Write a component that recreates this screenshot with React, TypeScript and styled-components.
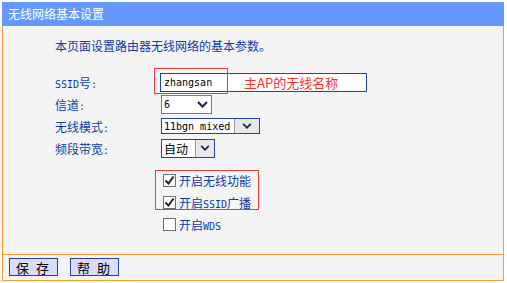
import React from "react";
import styled, { createGlobalStyle } from "styled-components";

const Global = createGlobalStyle`
  html, body { margin: 0; padding: 0; background: #ffffff; }
  body {
    font-family: "Noto Sans CJK SC", "Liberation Sans", sans-serif;
    font-size: 12px;
  }
`;

const Page = styled.div`
  padding: 2px 0 0 2px;
  width: 502px;
`;

const Header = styled.div`
  height: 24px;
  line-height: 24px;
  background: #6699ff;
  color: #ffffff;
  font-size: 12px;
  padding-left: 6px;
`;

const Body = styled.div`
  background: #f4f4f4;
  border: 1px solid #ff9933;
  border-top: none;
  padding: 10px 0 0 52px;
  box-sizing: content-box;
  height: 218px;
`;

const Intro = styled.div`
  line-height: 20px;
  color: #0f3ba0;
  font-size: 12px;
`;

const Form = styled.div`
  margin-top: 15px;
  display: flex;
  flex-direction: column;
`;

const Row = styled.div<{ $h?: number }>`
  display: grid;
  grid-template-columns: 105px auto;
  align-items: center;
  height: ${(p) => p.$h ?? 22}px;
`;

const Label = styled.div`
  color: #0f3ba0;
  font-size: 12px;
  white-space: nowrap;
`;

const Mono = styled.span`
  font-family: "DejaVu Sans Mono", "Liberation Mono", monospace;
  font-size: 10px;
`;

const Cell = styled.div`
  position: relative;
  display: flex;
  align-items: center;
  height: 100%;
`;

const TextBox = styled.div`
  box-sizing: border-box;
  width: 207px;
  height: 19px;
  border: 1px solid #1f44a8;
  background: #ffffff;
  display: flex;
  align-items: center;
  padding-left: 3px;
  color: #000;
`;

const Note = styled.span`
  position: absolute;
  left: 84px;
  top: 0;
  height: 100%;
  display: flex;
  align-items: center;
  color: #ff3030;
  font-size: 13px;
  font-family: "Noto Sans CJK SC", sans-serif;
`;

const RedBox = styled.div<{ $l: number; $t: number; $w: number; $h: number }>`
  position: absolute;
  left: ${(p) => p.$l}px;
  top: ${(p) => p.$t}px;
  width: ${(p) => p.$w}px;
  height: ${(p) => p.$h}px;
  box-sizing: border-box;
  border: 1px solid #f03a3a;
  pointer-events: none;
`;

const Select = styled.div<{ $w: number; $h: number; $gray?: boolean }>`
  box-sizing: border-box;
  margin-left: 1px;
  width: ${(p) => p.$w}px;
  height: ${(p) => p.$h}px;
  border: 1px solid ${(p) => (p.$gray ? "#7a7a7a" : "#1f44a8")};
  background: #ffffff;
  display: flex;
  align-items: center;
  color: #000;
`;

const SelValue = styled.div`
  flex: 1;
  padding-left: 2px;
  white-space: nowrap;
  display: flex;
  align-items: center;
`;

const Arrow = styled.div`
  width: 18px;
  display: flex;
  align-items: center;
  justify-content: center;
`;

const DropBtn = styled.div<{ $w: number }>`
  box-sizing: border-box;
  width: ${(p) => p.$w}px;
  height: 100%;
  background: #e8e8e8;
  border-left: 1px solid #9a9a9a;
  display: flex;
  align-items: center;
  justify-content: center;
`;

const Chevron = ({ w = 11, h = 7 }: { w?: number; h?: number }) => (
  <svg width={w} height={h} viewBox="0 0 11 7">
    <polyline
      points="1,1 5.5,5.5 10,1"
      fill="none"
      stroke="#1a2450"
      strokeWidth="2"
    />
  </svg>
);

const Check = styled.div`
  box-sizing: border-box;
  width: 13px;
  height: 13px;
  margin-left: 3px;
  border: 1px solid #707070;
  background: #ffffff;
  display: flex;
  align-items: center;
  justify-content: center;
`;

const CheckText = styled.span`
  margin-left: 3px;
  color: #0f3ba0;
  font-size: 12px;
  white-space: nowrap;
`;

const Tick = () => (
  <svg width="11" height="11" viewBox="0 0 11 11">
    <polyline
      points="1.5,5.5 4.5,8.5 9.5,1.5"
      fill="none"
      stroke="#222"
      strokeWidth="2"
    />
  </svg>
);

const Group = styled.div`
  position: relative;
  display: flex;
  flex-direction: column;
  padding-top: 10px;
`;

const Footer = styled.div`
  background: #f4f4f4;
  border: 1px solid #ff9933;
  border-top: none;
  display: flex;
  align-items: flex-start;
  gap: 12px;
  padding: 3px 0 0 6px;
  box-sizing: border-box;
  height: 26px;
`;

const Button = styled.div`
  box-sizing: border-box;
  width: 49px;
  height: 18px;
  background: #dcdcfc;
  border: 1px solid #1f44a8;
  color: #000;
  font-size: 13px;
  display: flex;
  align-items: center;
  justify-content: center;
  letter-spacing: 2px;
`;

function CheckRow({ checked, children }: { checked: boolean; children: React.ReactNode }) {
  return (
    <Row>
      <div />
      <Cell>
        <Check>{checked && <Tick />}</Check>
        <CheckText>{children}</CheckText>
      </Cell>
    </Row>
  );
}

export default function App() {
  return (
    <>
      <Global />
      <Page>
        <Header>无线网络基本设置</Header>
        <Body>
          <Intro>本页面设置路由器无线网络的基本参数。</Intro>
          <Form>
            <Row>
              <Label>
                <Mono>SSID</Mono>号<Mono>:</Mono>
              </Label>
              <Cell>
                <TextBox>
                  <Mono>zhangsan</Mono>
                  <Note>主AP的无线名称</Note>
                </TextBox>
                <RedBox $l={-6} $t={-3} $w={74} $h={26} />
              </Cell>
            </Row>
            <Row>
              <Label>
                信道<Mono>:</Mono>
              </Label>
              <Cell>
                <Select $w={51} $h={19} $gray>
                  <SelValue>
                    <Mono>6</Mono>
                  </SelValue>
                  <Arrow>
                    <Chevron />
                  </Arrow>
                </Select>
              </Cell>
            </Row>
            <Row>
              <Label>
                无线模式<Mono>:</Mono>
              </Label>
              <Cell>
                <Select $w={99} $h={16}>
                  <SelValue>
                    <Mono>11bgn mixed</Mono>
                  </SelValue>
                  <DropBtn $w={25}>
                    <Chevron w={10} h={6} />
                  </DropBtn>
                </Select>
              </Cell>
            </Row>
            <Row>
              <Label>
                频段带宽<Mono>:</Mono>
              </Label>
              <Cell>
                <Select $w={54} $h={19}>
                  <SelValue>自动</SelValue>
                  <DropBtn $w={19}>
                    <Chevron w={10} h={6} />
                  </DropBtn>
                </Select>
              </Cell>
            </Row>
            <Group>
              <CheckRow checked>开启无线功能</CheckRow>
              <CheckRow checked>
                开启<Mono>SSID</Mono>广播
              </CheckRow>
              <CheckRow checked={false}>
                开启<Mono>WDS</Mono>
              </CheckRow>
              <RedBox $l={100} $t={11} $w={104} $h={40} />
            </Group>
          </Form>
        </Body>
        <Footer>
          <Button>保 存</Button>
          <Button>帮 助</Button>
        </Footer>
      </Page>
    </>
  );
}
